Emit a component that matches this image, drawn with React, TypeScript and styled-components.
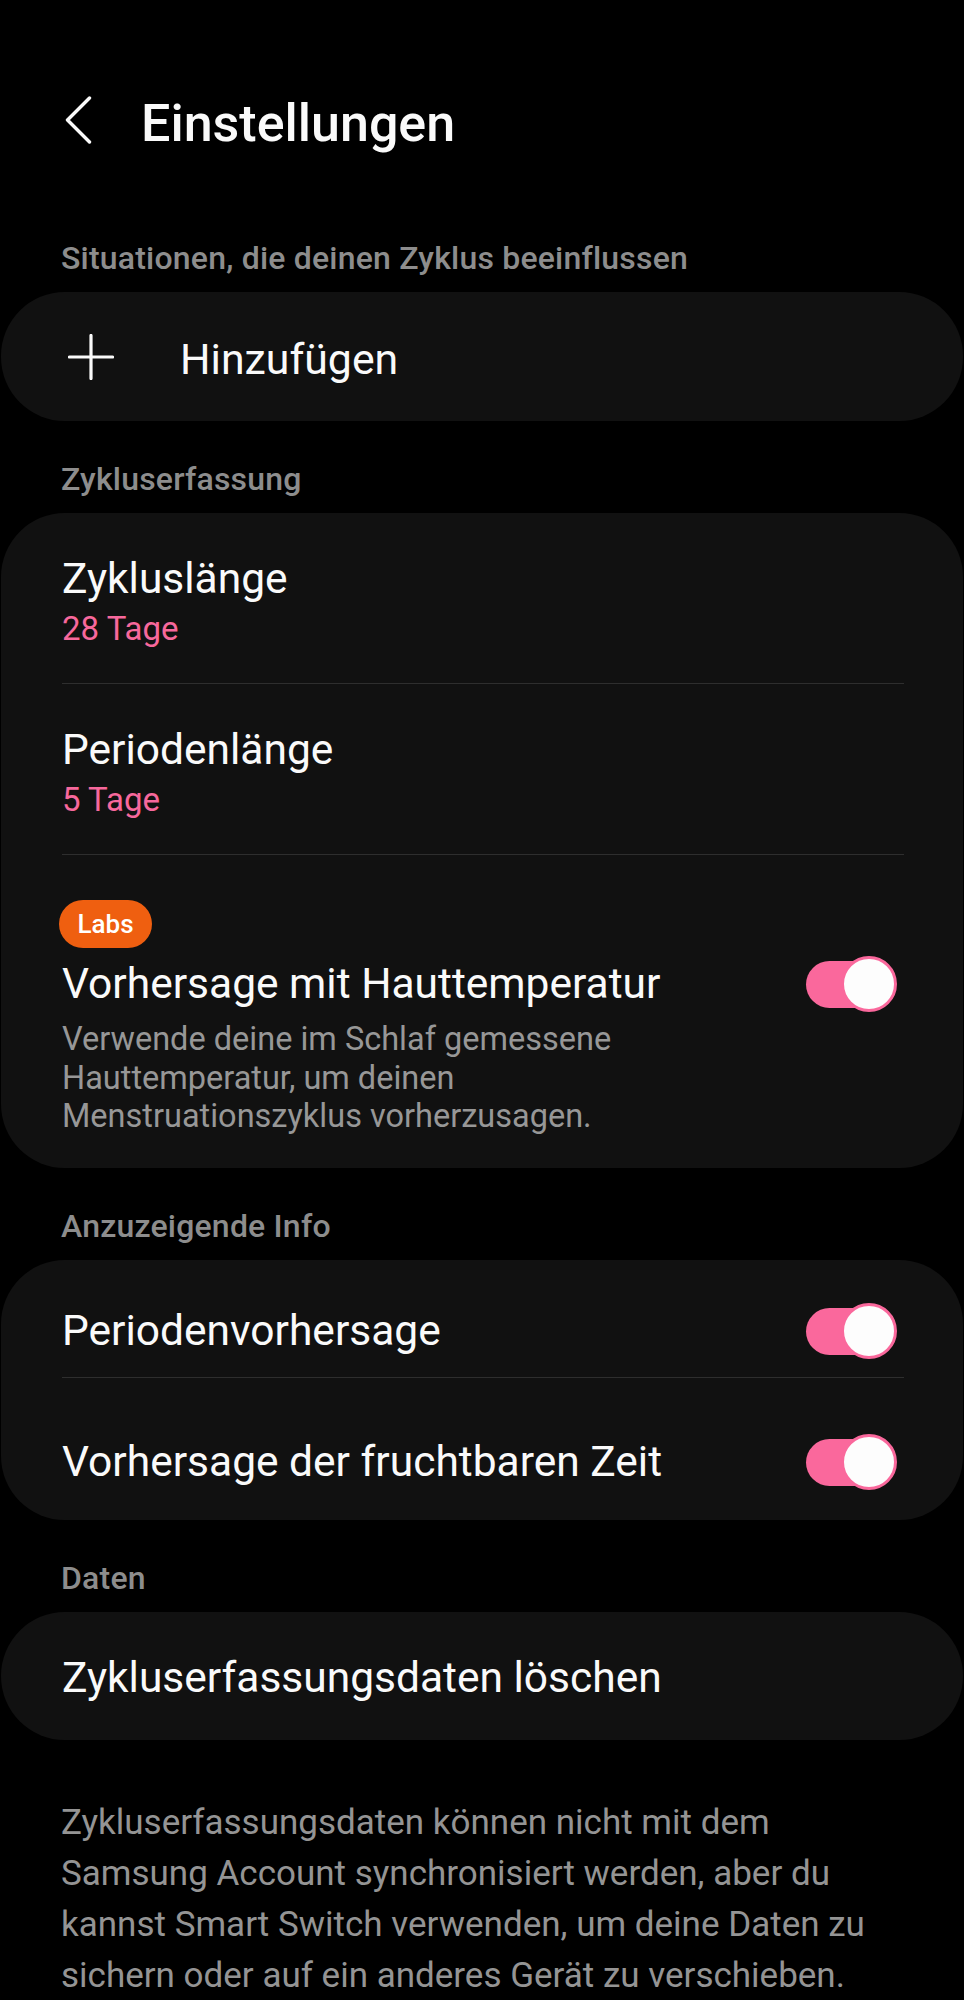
import React from "react";
import styled, { createGlobalStyle } from "styled-components";

const GlobalStyle = createGlobalStyle`
  html, body {
    margin: 0;
    padding: 0;
    background: #000;
  }
  body {
    font-family: Roboto, "Noto Sans", "Liberation Sans", sans-serif;
    color: #fafafa;
  }
`;

const Page = styled.div`
  width: 964px;
  min-height: 2000px;
  background: #000;
  overflow: hidden;
`;

const Header = styled.header`
  display: flex;
  align-items: center;
  gap: 49px;
  padding: 94px 0 46px 65px;
  height: 60px;
`;

const BackButton = styled.button`
  display: flex;
  align-items: center;
  padding: 0;
  border: none;
  background: none;
  cursor: pointer;
  margin-top: -8px;
`;

const Title = styled.h1`
  margin: 0;
  font-size: 52px;
  line-height: 60px;
  font-weight: 500;
  color: #fafafa;
`;

const SectionLabel = styled.div`
  padding: 38px 61px 14px;
  font-size: 32px;
  line-height: 40px;
  font-weight: 500;
  letter-spacing: 0.2px;
  color: #8d8d8d;
`;

const Card = styled.section`
  background: #111111;
  border-radius: 64px;
  margin: 0 1px;
`;

const AddRow = styled.div`
  display: flex;
  align-items: center;
  padding: 43px 61px 38px 67px;
  gap: 66px;
`;

const PlusIcon = styled.svg`
  width: 46px;
  height: 46px;
  flex-shrink: 0;
  margin-top: -4px;
`;

const ItemRow = styled.div<{ $top?: number; $bottom?: number }>`
  display: flex;
  align-items: center;
  justify-content: space-between;
  padding: ${(p) => p.$top ?? 42}px 66px ${(p) => p.$bottom ?? 34}px 61px;
`;

const ItemText = styled.div`
  display: flex;
  flex-direction: column;
`;

const ItemTitle = styled.div<{ $size?: number }>`
  font-size: ${(p) => p.$size ?? 42.5}px;
  line-height: 48px;
  color: #fafafa;
  white-space: nowrap;
`;

const ItemValue = styled.div`
  margin-top: 6px;
  font-size: 33px;
  line-height: 40px;
  color: #f7689c;
`;

const Divider = styled.div`
  height: 1px;
  margin: 0 59px 0 61px;
  background: #2e2e2e;
`;

const LabsBlock = styled.div`
  padding: 45px 66px 32px 61px;
`;

const Badge = styled.span`
  display: inline-flex;
  align-items: center;
  justify-content: center;
  width: 93px;
  height: 48px;
  margin-left: -3px;
  border-radius: 24px;
  background: #ef5f10;
  color: #fff;
  font-size: 26px;
  font-weight: 500;
`;

const TitleRow = styled.div`
  display: flex;
  align-items: center;
  justify-content: space-between;
  height: 48px;
  margin-top: 12px;
`;

const Description = styled.p`
  margin: 12px 0 0;
  font-size: 32.5px;
  line-height: 38.5px;
  color: #979797;
`;

const SwitchWrap = styled.div`
  position: relative;
  width: 91px;
  height: 56px;
  margin: -4px 0;
  flex-shrink: 0;
`;

const SwitchTrack = styled.div`
  position: absolute;
  left: 0;
  top: 5px;
  width: 76px;
  height: 47px;
  border-radius: 24px;
  background: #fa689c;
`;

const SwitchThumb = styled.div`
  position: absolute;
  right: 0;
  top: 0;
  width: 56px;
  height: 56px;
  box-sizing: border-box;
  border-radius: 50%;
  border: 3px solid #fa689c;
  background: #fdfdfd;
`;

const Footer = styled.p`
  margin: 57px 0 0;
  padding: 0 61px;
  font-size: 35px;
  line-height: 51px;
  color: #949494;
  white-space: nowrap;
`;

const Toggle: React.FC = () => (
  <SwitchWrap>
    <SwitchTrack />
    <SwitchThumb />
  </SwitchWrap>
);

const App: React.FC = () => {
  return (
    <Page>
      <GlobalStyle />
      <Header>
        <BackButton aria-label="Zurück">
          <svg width="27" height="48" viewBox="0 0 27 48" fill="none">
            <path
              d="M24.5 2 L2.5 24 L24.5 46"
              stroke="#fafafa"
              strokeWidth="3.4"
              strokeLinecap="round"
              strokeLinejoin="round"
            />
          </svg>
        </BackButton>
        <Title>Einstellungen</Title>
      </Header>

      <SectionLabel>Situationen, die deinen Zyklus beeinflussen</SectionLabel>
      <Card>
        <AddRow>
          <PlusIcon viewBox="0 0 46 46" fill="none">
            <path d="M23 1.5 V44.5 M1.5 23 H44.5" stroke="#fafafa" strokeWidth="3.2" strokeLinecap="round" />
          </PlusIcon>
          <ItemTitle $size={42.8}>Hinzufügen</ItemTitle>
        </AddRow>
      </Card>

      <SectionLabel>Zykluserfassung</SectionLabel>
      <Card>
        <ItemRow>
          <ItemText>
            <ItemTitle>Zykluslänge</ItemTitle>
            <ItemValue>28 Tage</ItemValue>
          </ItemText>
        </ItemRow>
        <Divider />
        <ItemRow>
          <ItemText>
            <ItemTitle>Periodenlänge</ItemTitle>
            <ItemValue>5 Tage</ItemValue>
          </ItemText>
        </ItemRow>
        <Divider />
        <LabsBlock>
          <Badge>Labs</Badge>
          <TitleRow>
            <ItemTitle>Vorhersage mit Hauttemperatur</ItemTitle>
            <Toggle />
          </TitleRow>
          <Description>
            Verwende deine im Schlaf gemessene
            <br />
            Hauttemperatur, um deinen
            <br />
            Menstruationszyklus vorherzusagen.
          </Description>
        </LabsBlock>
      </Card>

      <SectionLabel>Anzuzeigende Info</SectionLabel>
      <Card>
        <ItemRow $top={47} $bottom={22}>
          <ItemTitle>Periodenvorhersage</ItemTitle>
          <Toggle />
        </ItemRow>
        <Divider />
        <ItemRow $top={60} $bottom={34}>
          <ItemTitle>Vorhersage der fruchtbaren Zeit</ItemTitle>
          <Toggle />
        </ItemRow>
      </Card>

      <SectionLabel>Daten</SectionLabel>
      <Card>
        <ItemRow $top={42} $bottom={38}>
          <ItemTitle>Zykluserfassungsdaten löschen</ItemTitle>
        </ItemRow>
      </Card>

      <Footer>
        Zykluserfassungsdaten können nicht mit dem
        <br />
        Samsung Account synchronisiert werden, aber du
        <br />
        kannst Smart Switch verwenden, um deine Daten zu
        <br />
        sichern oder auf ein anderes Gerät zu verschieben.
      </Footer>
    </Page>
  );
};

export default App;
